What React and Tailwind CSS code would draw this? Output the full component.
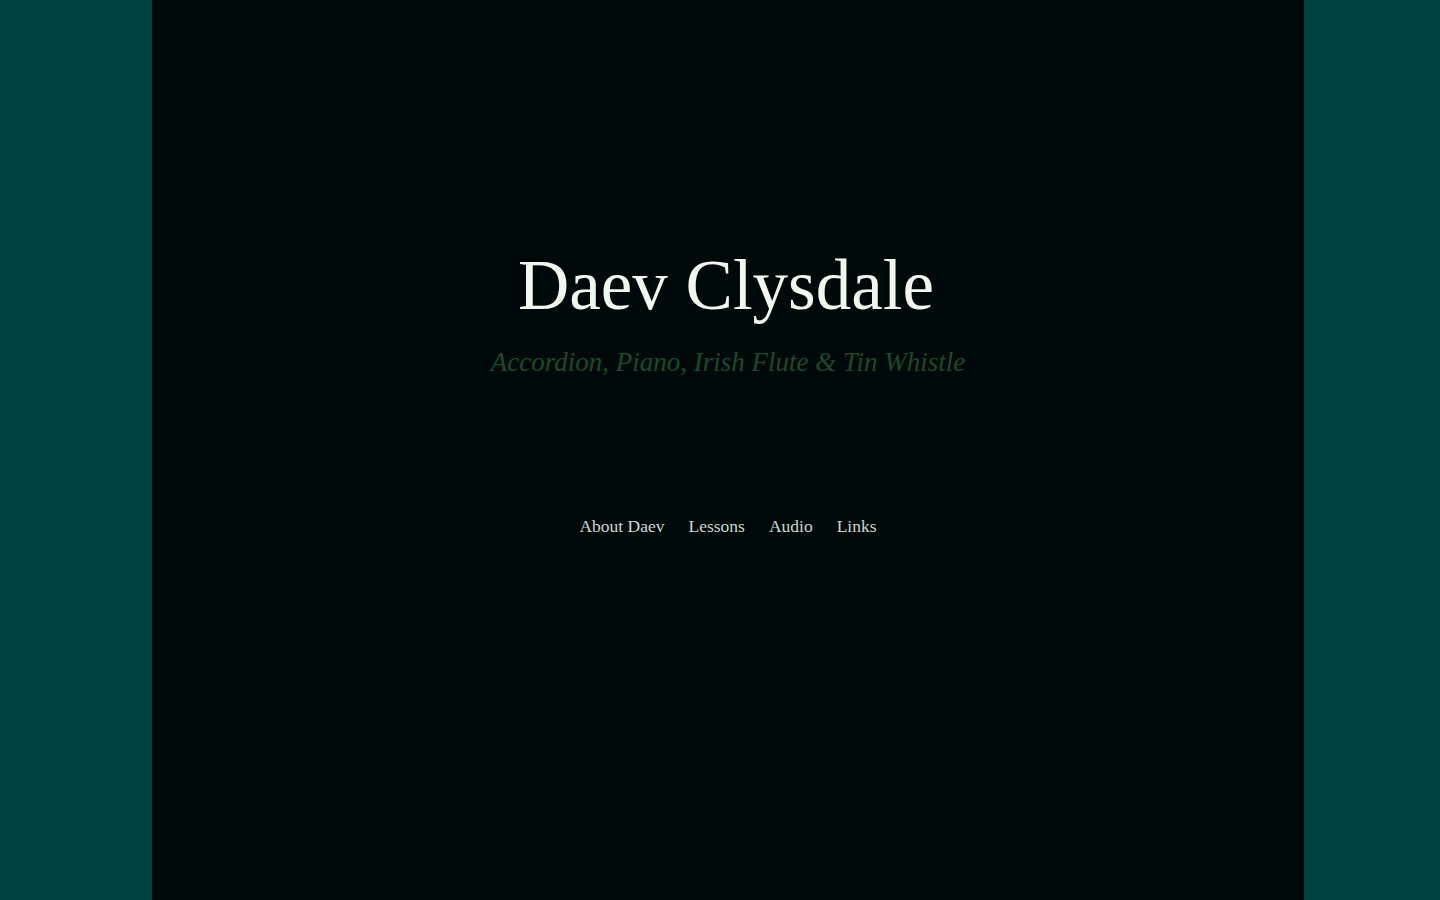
import React from 'react';

const links = ['About Daev', 'Lessons', 'Audio', 'Links'];

export default function App() {
    return (
        <div className="min-h-screen bg-[#004142] flex">
            <div className="ml-[152px] w-[1152px] min-h-screen bg-[#000909] flex flex-col items-center font-['Liberation_Serif',serif]">
                <h1 className="mt-[237px] text-[71px] leading-[96px] text-[#f1f6ef] -translate-x-[2px]">Daev Clysdale</h1>
                <p className="mt-[9px] text-[27px] leading-[40px] italic text-[#1d4a2e]">
                    Accordion, Piano, Irish Flute &amp; Tin Whistle
                </p>
                <nav className="mt-[132px] flex gap-6 text-[17.5px] leading-6 text-[#c9d9d1]">
                    {links.map((l) => (
                        <a key={l} href="#" className="hover:text-white">{l}</a>
                    ))}
                </nav>
            </div>
        </div>
    );
}
